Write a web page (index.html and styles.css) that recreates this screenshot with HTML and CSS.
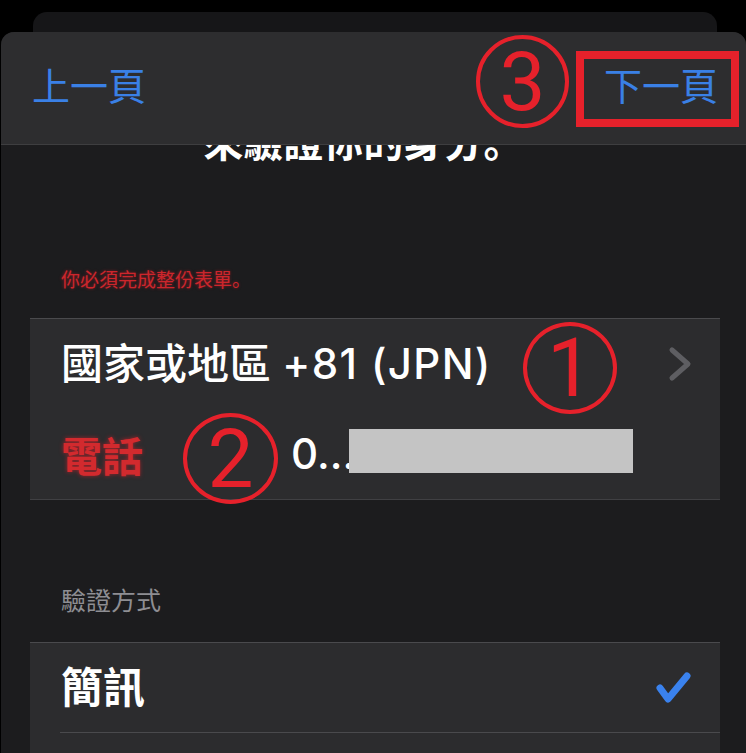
FILE: index.html
```html
<!DOCTYPE html>
<html lang="zh-Hant">
<head>
<meta charset="utf-8">
<title>驗證你的身分</title>
<link rel="stylesheet" href="styles.css">
</head>
<body>
<div class="screen">
  <div class="back-card"></div>
  <div class="sheet">
    <header class="nav">
      <span class="nav-btn">上一頁</span>
      <span class="nav-btn">下一頁</span>
    </header>
    <main class="content">
      <h1 class="title">來驗證你的身分<span class="punct">。</span></h1>
      <p class="error">你必須完成整份表單<span class="punct">。</span></p>
      <ul class="group">
        <li class="row">
          <span class="row-text">國家或地區 <span class="latin">+81 (JPN)</span></span>
          <svg class="chevron" width="24" height="36" viewBox="0 0 24 36" aria-hidden="true">
            <polyline points="4,4 20,18 4,32" fill="none" stroke="#5e5e62" stroke-width="5" stroke-linecap="round" stroke-linejoin="round"/>
          </svg>
        </li>
        <li class="row">
          <span class="label-red">電話</span>
          <span class="value">0...</span><span class="redact"></span>
        </li>
      </ul>
      <p class="section">驗證方式</p>
      <ul class="group">
        <li class="row row-inset">
          <span class="row-text bold">簡訊</span>
          <svg class="check" width="38" height="34" viewBox="0 0 38 34" aria-hidden="true">
            <polyline points="6,17 14,28 33,5" fill="none" stroke="#3a82ee" stroke-width="7" stroke-linecap="round" stroke-linejoin="round"/>
          </svg>
        </li>
        <li class="row row-cut"></li>
      </ul>
    </main>
  </div>
  <span class="mark mark-3">3</span>
  <span class="focus-box"></span>
  <span class="mark mark-1">1</span>
  <span class="mark mark-2">2</span>
</div>
</body>
</html>
```
FILE: styles.css
```css
* { box-sizing: border-box; }

html, body {
  margin: 0;
  padding: 0;
  background: #000;
}

body {
  width: 746px;
  height: 753px;
  overflow: hidden;
  font-family: Inter, "Noto Sans CJK TC", "Noto Sans CJK JP", sans-serif;
  color: #fff;
}

.screen {
  position: relative;
  padding-top: 12px;
  height: 753px;
}

.back-card {
  height: 40px;
  margin: 0 29px 0 33px;
  background: #161618;
  border-radius: 14px 14px 0 0;
}

.sheet {
  margin: -20px 0 0 1px;
  height: 740px;
  background: #1c1c1e;
  border-radius: 13px 13px 0 0;
  overflow: hidden;
}

.nav {
  position: relative;
  z-index: 2;
  height: 113px;
  display: flex;
  justify-content: space-between;
  align-items: center;
  padding: 0 28px 8px 31px;
  background: #2d2d2f;
  border-bottom: 1px solid #3e3e40;
}

.nav-btn {
  font-family: "Noto Sans CJK TC", "Noto Sans CJK JP", sans-serif;
  font-size: 38px;
  line-height: 46px;
  color: #3a80e6;
}

.content {
  display: flex;
  flex-direction: column;
}

.title {
  margin: -29px 0 0;
  padding-right: 20px;
  font-family: "Noto Sans CJK TC", "Noto Sans CJK JP", sans-serif;
  font-size: 40px;
  line-height: 48px;
  font-weight: 700;
  text-align: center;
  color: #fff;
}

.punct {
  font-family: "Noto Sans CJK JP", "Noto Sans CJK SC", sans-serif;
  font-feature-settings: "locl" 0;
  font-variant-east-asian: normal;
}

.error {
  margin: 103px 0 0;
  padding-left: 60px;
  font-family: "Noto Sans CJK TC", "Noto Sans CJK JP", sans-serif;
  font-size: 19px;
  line-height: 24px;
  color: #cc262c;
  text-shadow: 0 0 3px rgba(230, 30, 40, 0.55);
}

.group {
  list-style: none;
  margin: 27px 26px 0 29px;
  padding: 0;
  background: #2c2c2e;
  border-top: 1px solid #4a4a4d;
  border-bottom: 1px solid #404043;
}

.row {
  height: 90px;
  display: flex;
  align-items: center;
  padding: 0 28px 0 31px;
}

.row-text {
  font-size: 42px;
  line-height: 50px;
  font-weight: 500;
  color: #fff;
  white-space: nowrap;
}

.latin {
  letter-spacing: 1.4px;
}

.row-text.bold {
  font-weight: 700;
}

.chevron {
  margin-left: auto;
}

.label-red {
  min-width: 230px;
  font-family: "Noto Sans CJK TC", "Noto Sans CJK JP", sans-serif;
  font-size: 41px;
  line-height: 50px;
  font-weight: 700;
  color: #d22a2e;
  text-shadow: 0 0 4px rgba(235, 30, 40, 0.6);
}

.value {
  font-size: 42px;
  line-height: 50px;
  font-weight: 500;
  color: #fff;
}

.redact {
  display: inline-block;
  width: 284px;
  height: 44px;
  margin: -6px 0 0 -6px;
  background: #c4c4c4;
}

.section {
  margin: 84px 0 0;
  padding-left: 60px;
  font-family: "Noto Sans CJK TC", "Noto Sans CJK JP", sans-serif;
  font-size: 25px;
  line-height: 30px;
  color: #8e8e93;
}

.group + .section + .group {
  margin-top: 28px;
  border-bottom: none;
}

.row-inset {
  height: 90px;
  margin-left: 30px;
  padding: 0 28px 0 1px;
  border-bottom: 1px solid #4a4a4d;
  justify-content: space-between;
}

.row-cut {
  height: 60px;
}

.mark {
  position: absolute;
  display: flex;
  align-items: center;
  justify-content: center;
  border: 4px solid #e6212b;
  border-radius: 50%;
  font-family: Roboto, "Liberation Sans", sans-serif;
  font-size: 82px;
  line-height: 1;
  color: #e6212b;
  z-index: 5;
}

.mark-3 { left: 476px; top: 35px; width: 93px; height: 93px; }
.mark-1 { left: 523px; top: 322px; width: 94px; height: 92px; }
.mark-2 { left: 183px; top: 413px; width: 95px; height: 91px; }

.focus-box {
  position: absolute;
  left: 576px;
  top: 51px;
  width: 163px;
  height: 76px;
  border: 8px solid #e6212b;
  z-index: 5;
}
```
